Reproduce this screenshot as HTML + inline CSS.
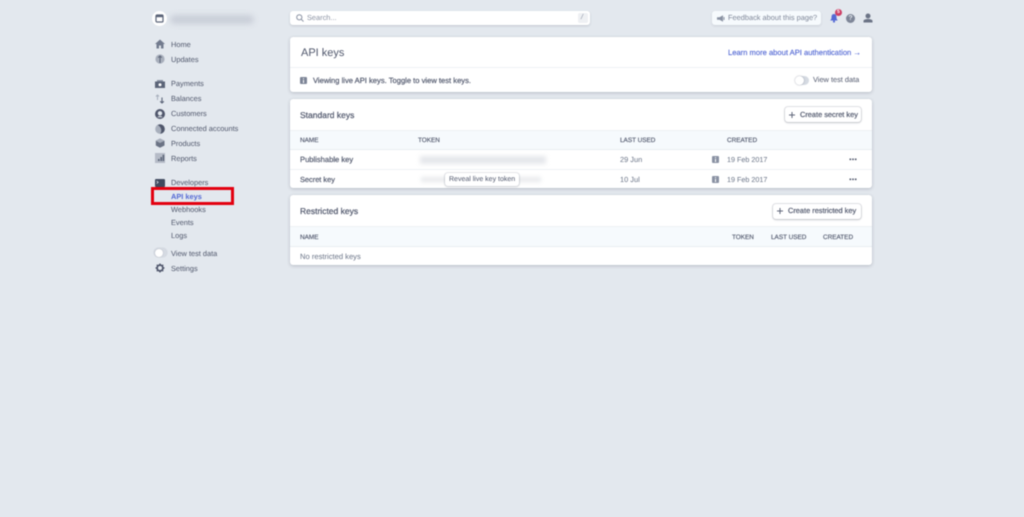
<!DOCTYPE html>
<html><head><meta charset="utf-8"><style>
html,body{margin:0;padding:0;width:1024px;height:517px;overflow:hidden;background:#e3e8ee}
body{font-family:"Liberation Sans",sans-serif;font-size:7.4px;color:#4f566b;position:relative;text-rendering:geometricPrecision}
#w{position:absolute;left:0;top:0;width:1024px;height:517px;filter:blur(.4px)}
.t{position:absolute;white-space:nowrap;line-height:10px}
.c{position:absolute;left:290px;width:582px;background:#fff;border-radius:3px;box-shadow:0 1px 3px rgba(60,66,87,.25),0 0 1px rgba(60,66,87,.15)}
.l{position:absolute;background:#eef1f5;height:1px}
.h{position:absolute;left:290px;width:582px;background:#f6fafd;border-top:1px solid #eef1f5;border-bottom:1px solid #e9edf2;box-sizing:border-box}
.btn{position:absolute;background:#fff;border-radius:3px;box-shadow:0 0 0 1px rgba(60,66,87,.14),0 1px 2px rgba(60,66,87,.2)}
.n{left:171px;color:#4f566b}
svg{position:absolute;overflow:visible}
.g{color:#697386}
.th{font-size:6.4px;-webkit-text-stroke:.15px #4f566b}
.m{-webkit-text-stroke:.18px #4f566b}
</style></head><body><div id="w">

<div style="position:absolute;left:152px;top:11px;width:15px;height:15px;border-radius:50%;background:#fff"></div>
<svg style="left:155px;top:14px" width="9" height="9"><rect x="1" y="1" width="7" height="7" rx="1" fill="none" stroke="#5b6478" stroke-width="1.2"/><rect x="1" y="1" width="7" height="2.2" fill="#5b6478"/></svg>
<div style="position:absolute;left:170px;top:15px;width:84px;height:9px;background:#c9ced8;border-radius:5px;filter:blur(3px)"></div>

<svg style="left:155px;top:39px" width="10" height="10"><path d="M0 5 5 0.5 10 5H8.5V9.5H6V6.5H4V9.5H1.5V5Z" fill="#727b8e"/></svg>
<div class="t n" style="top:40px">Home</div>
<svg style="left:155px;top:54px" width="10" height="10"><circle cx="5" cy="5" r="4.6" fill="#a8afbc"/><path d="M5 2v7M3.2 3.6 5 2l1.8 1.6" stroke="#5b6478" fill="none" stroke-width="1"/></svg>
<div class="t n" style="top:55px">Updates</div>

<svg style="left:155px;top:79px" width="10" height="10"><path d="M0 2.5H10V9H0Z" fill="#5b6478"/><rect x="2" y="1" width="6" height="1.5" fill="#8a92a3"/><circle cx="5" cy="5.8" r="1.5" fill="#fff"/></svg>
<div class="t n" style="top:79px">Payments</div>
<svg style="left:155px;top:94px" width="10" height="10"><path d="M2.5 6V1M1 2.5 2.5 1 4 2.5" stroke="#a8afbc" fill="none"/><path d="M7 3.5V9M5.2 7.3 7 9 8.8 7.3" stroke="#5b6478" fill="none" stroke-width="1.1"/></svg>
<div class="t n" style="top:94px">Balances</div>
<svg style="left:155px;top:109px" width="10" height="10"><circle cx="5" cy="5" r="5" fill="#4f566b"/><circle cx="5" cy="4.3" r="2.2" fill="#e3e8ee"/><path d="M2.3 8.2a3 2.2 0 0 1 5.4 0Z" fill="#e3e8ee"/></svg>
<div class="t n" style="top:109px">Customers</div>
<svg style="left:155px;top:124px" width="10" height="10"><circle cx="5" cy="5" r="4.8" fill="#a8afbc"/><path d="M5 .2A4.8 4.8 0 0 1 9.8 5 4.8 4.8 0 0 1 5 9.8C7 8 7 3 2.5 1Z" fill="#4f566b"/></svg>
<div class="t n" style="top:124px">Connected accounts</div>
<svg style="left:155px;top:138px" width="10" height="10"><path d="M5 .5 9.5 2.7V7.5L5 9.8.8 7.500V2.700Z" fill="#6b7385"/><path d="M5 .5 9.5 2.7 5 5 .8 2.700Z" fill="#a8afbc"/></svg>
<div class="t n" style="top:139px">Products</div>
<svg style="left:155px;top:153px" width="10" height="10"><rect width="10" height="10" fill="#b5bbc7"/><path d="M3 8V6H4.600V8ZM5.400 8V4H7V8ZM7.600 8V1.800H9.200V8Z" fill="#5b6478"/></svg>
<div class="t n" style="top:154px">Reports</div>

<svg style="left:155px;top:178px" width="10" height="10"><rect y="1" width="10" height="8" rx="1" fill="#3f4a5f"/><path d="M1.600 3 3.200 4.300 1.600 5.600" stroke="#e3e8ee" fill="none" stroke-width=".7"/></svg>
<div class="t n" style="top:178px">Developers</div>
<div class="t" style="left:171px;top:192px;color:#5469d4;font-weight:700">API keys</div>
<div style="position:absolute;left:151px;top:187px;width:83px;height:18px;border:3px solid #e3000f;box-sizing:border-box"></div>
<div class="t n" style="top:205px">Webhooks</div>
<div class="t n" style="top:218px">Events</div>
<div class="t n" style="top:231px">Logs</div>

<div style="position:absolute;left:154px;top:248px;width:13px;height:9px;border-radius:5px;background:#d5dae2;box-shadow:0 0 1px rgba(60,66,87,.3)"></div>
<div style="position:absolute;left:155px;top:248.500px;width:8px;height:8px;border-radius:50%;background:#fff;box-shadow:0 0 1px rgba(60,66,87,.4)"></div>
<div class="t n" style="top:249px">View test data</div>
<svg style="left:155px;top:263px" width="10" height="10"><circle cx="5" cy="5" r="2.900" fill="none" stroke="#4f566b" stroke-width="1.800"/><path d="M5 .5v2M5 7.500v2M.5 5h2M7.500 5h2M1.800 1.800l1.400 1.400M6.800 6.800l1.400 1.400M8.200 1.800 6.800 3.200M3.200 6.800 1.800 8.200" stroke="#4f566b" stroke-width="1.300"/></svg>
<div class="t n" style="top:264px">Settings</div>

<div style="position:absolute;left:290px;top:11px;width:300px;height:14px;background:#fff;border-radius:3px;box-shadow:0 1px 2px rgba(60,66,87,.2)"></div>
<svg style="left:296px;top:14px" width="8" height="8"><circle cx="3.300" cy="3.300" r="2.600" fill="none" stroke="#8a92a3" stroke-width="1"/><path d="M5.300 5.300 7.500 7.500" stroke="#8a92a3"/></svg>
<div class="t" style="left:307px;top:13px;color:#8a92a3">Search...</div>
<div style="position:absolute;left:578px;top:13px;width:10px;height:10px;background:#eef0f3;border-radius:2px"></div>
<div class="t" style="left:581px;top:13px;color:#8a92a3;font-style:italic;font-size:7px">/</div>

<div style="position:absolute;left:712px;top:11px;width:109px;height:14px;background:#f6fafd;border-radius:3px;box-shadow:0 1px 2px rgba(60,66,87,.15)"></div>
<svg style="left:717px;top:15px" width="8" height="7"><path d="M0 2.300H2.500L6 .2V6.800L2.500 4.700H0Z" fill="#8a92a3"/><path d="M7 2V5" stroke="#8a92a3"/></svg>
<div class="t" style="left:728px;top:13px;color:#7d8597">Feedback about this page?</div>
<svg style="left:830px;top:13px" width="9" height="10"><path d="M4 1C2 1 1.500 2.500 1.500 4.500 1.500 6 .7 7 .2 7.500H7.800C7.300 7 6.500 6 6.500 4.500 6.500 2.500 6 1 4 1Z" fill="#5469d4"/><circle cx="4" cy="8.500" r="1.100" fill="#5469d4"/></svg>
<div style="position:absolute;left:835px;top:9px;width:7px;height:7px;border-radius:50%;background:#cd3d64"></div>
<div class="t" style="left:837px;top:9px;color:#fff;font-size:5px;line-height:7px;font-weight:700">5</div>
<div style="position:absolute;left:846px;top:14px;width:9px;height:9px;border-radius:50%;background:#7d8597;color:#e3e8ee;font-size:7px;line-height:9px;text-align:center;font-weight:700">?</div>
<svg style="left:863px;top:13px" width="10" height="10"><circle cx="5" cy="3" r="2.500" fill="#6b7385"/><path d="M.5 9.500V8C.5 6.500 3 6 5 6S9.500 6.500 9.500 8V9.500Z" fill="#6b7385"/></svg>

<div class="c" style="top:37px;height:55px"></div>
<div class="t" style="left:301px;top:47px;font-size:11px;line-height:12px;color:#4f566b">API keys</div>
<div class="t" style="left:728px;top:48px;font-size:7.600px;color:#5469d4;-webkit-text-stroke:.15px #5469d4">Learn more about API authentication →</div>
<div class="l" style="left:290px;top:67px;width:582px"></div>
<svg style="left:300px;top:76.500px" width="7" height="7"><rect width="7" height="7" rx="1" fill="#7d8597"/><rect x="3" y="1.200" width="1" height="1" fill="#fff"/><rect x="3" y="3" width="1" height="3" fill="#fff"/></svg>
<div class="t m" style="left:313px;top:76px;font-size:7.600px">Viewing live API keys. Toggle to view test keys.</div>
<div style="position:absolute;left:795px;top:76px;width:14px;height:9px;border-radius:5px;background:#d5dae2"></div>
<div style="position:absolute;left:795px;top:76px;width:9px;height:9px;border-radius:50%;background:#fff;box-shadow:0 0 1.500px rgba(60,66,87,.5)"></div>
<div class="t" style="left:813px;top:75px">View test data</div>

<div class="c" style="top:99px;height:89px"></div>
<div class="t" style="left:300px;top:110px;font-size:8.500px;-webkit-text-stroke:.2px #4f566b">Standard keys</div>
<div class="btn" style="left:785px;top:107px;width:76px;height:15px"></div>
<svg style="left:789px;top:112px" width="6" height="6"><path d="M3 0V6M0 3H6" stroke="#5f667a" stroke-width="1"/></svg>
<div class="t m" style="left:800px;top:110px">Create secret key</div>
<div class="h" style="top:130px;height:20px"></div>
<div class="t th" style="left:300px;top:136px">NAME</div>
<div class="t th" style="left:418px;top:136px">TOKEN</div>
<div class="t th" style="left:620px;top:136px">LAST USED</div>
<div class="t th" style="left:727px;top:136px">CREATED</div>

<div class="t m" style="left:300px;top:155px;font-size:7.600px">Publishable key</div>
<div style="position:absolute;left:420px;top:156px;width:126px;height:8px;background:#e5e7eb;filter:blur(2.500px)"></div>
<div class="t g" style="left:620px;top:155px">29 Jun</div>
<svg style="left:712px;top:156px" width="7" height="7"><rect width="7" height="7" rx="1" fill="#8a92a3"/><rect x="3" y="1.200" width="1" height="1" fill="#fff"/><rect x="3" y="3" width="1" height="3" fill="#fff"/></svg>
<div class="t g" style="left:727px;top:155px;font-size:7.200px">19 Feb 2017</div>
<svg style="left:849px;top:158px" width="8" height="3"><path d="M.5.500h1.600v1.600H.5zM3.200.500h1.600v1.600H3.200zM5.900.500h1.600v1.600H5.900z" fill="#4f566b"/></svg>
<div class="l" style="left:290px;top:169px;width:582px"></div>

<div class="t m" style="left:300px;top:175px">Secret key</div>
<div style="position:absolute;left:421px;top:177px;width:120px;height:5px;background:#e8eaed;filter:blur(2px)"></div>
<div class="btn" style="left:445px;top:173px;width:74px;height:13px;box-shadow:0 0 0 1px rgba(60,66,87,.12),0 1px 2px rgba(60,66,87,.15)"></div>
<div class="t" style="left:449px;top:175px;font-size:7px">Reveal live key token</div>
<div class="t g" style="left:620px;top:175px">10 Jul</div>
<svg style="left:712px;top:176px" width="7" height="7"><rect width="7" height="7" rx="1" fill="#8a92a3"/><rect x="3" y="1.200" width="1" height="1" fill="#fff"/><rect x="3" y="3" width="1" height="3" fill="#fff"/></svg>
<div class="t g" style="left:727px;top:175px;font-size:7.200px">19 Feb 2017</div>
<svg style="left:849px;top:178px" width="8" height="3"><path d="M.5.500h1.600v1.600H.5zM3.200.500h1.600v1.600H3.200zM5.900.500h1.600v1.600H5.900z" fill="#4f566b"/></svg>

<div class="c" style="top:195px;height:70px"></div>
<div class="t" style="left:300px;top:206px;font-size:8.500px;-webkit-text-stroke:.2px #4f566b">Restricted keys</div>
<div class="btn" style="left:773px;top:204px;width:88px;height:15px"></div>
<svg style="left:777px;top:208px" width="6" height="6"><path d="M3 0V6M0 3H6" stroke="#5f667a" stroke-width="1"/></svg>
<div class="t m" style="left:788px;top:206px">Create restricted key</div>
<div class="h" style="top:226px;height:21px"></div>
<div class="t th" style="left:300px;top:233px">NAME</div>
<div class="t th" style="left:732px;top:233px">TOKEN</div>
<div class="t th" style="left:771px;top:233px">LAST USED</div>
<div class="t th" style="left:823px;top:233px">CREATED</div>
<div class="t g" style="left:300px;top:252px;font-size:7.600px">No restricted keys</div>

</div></body></html>
